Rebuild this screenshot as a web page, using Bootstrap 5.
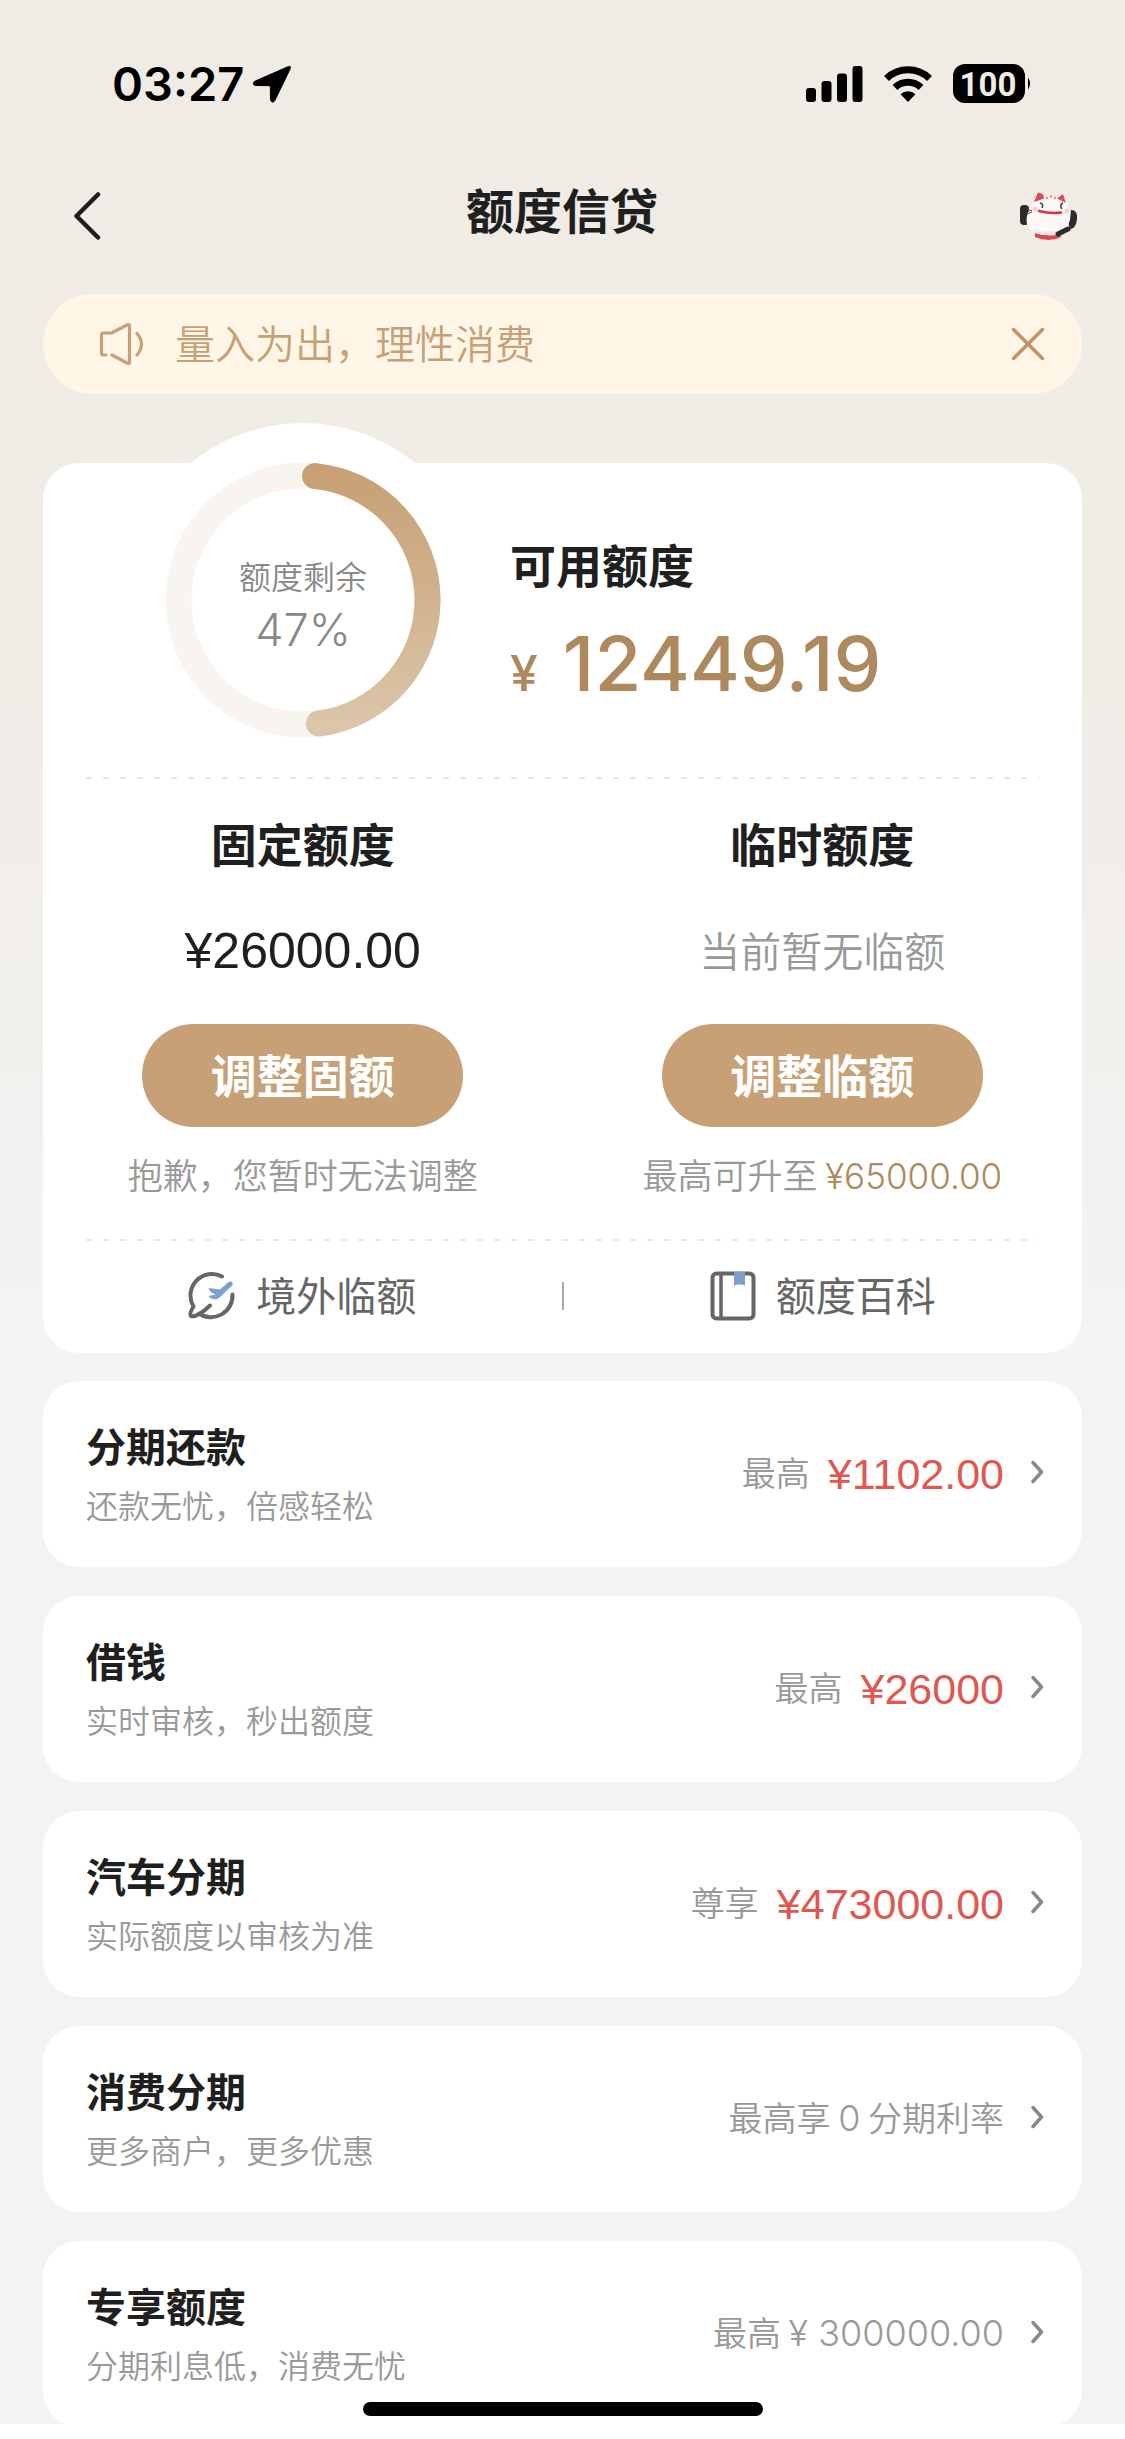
<!DOCTYPE html>
<html lang="zh-CN">
<head>
<meta charset="utf-8">
<meta name="viewport" content="width=device-width, initial-scale=1">
<title>额度信贷</title>
<link href="https://cdn.jsdelivr.net/npm/bootstrap@5.3.0/dist/css/bootstrap.min.css" rel="stylesheet">
<style>
  :root { --gold: #c7a175; --gold-dark: #ad895d; --ink: #1f1f1f; --grey: #999; --side: 43px; }
  body { font-family: "Noto Sans CJK SC", "Liberation Sans", sans-serif; font-weight: 350; color: var(--ink); background: #fff; }
  a { color: inherit; text-decoration: none; }
  svg { display: block; flex: none; }
  .num-soft { font-family: Inter, "Noto Sans CJK SC", sans-serif; font-weight: 300; }
  .num-plain { font-family: "Liberation Sans", "Noto Sans CJK SC", sans-serif; font-weight: 400; }

  .top-zone { background: linear-gradient(#f0ebe5 0%, #f0ece6 48%, #f4f4f4 100%); padding-bottom: 27px; }
  .status-strip { padding: 48px 93px 0 112px; height: 120px; }
  .clock { font: 600 47px/72px Inter, sans-serif; color: #000; }
  .page-head { padding: 18px 46px 0 74px; height: 174px; }
  .page-title { font-size: 48px; line-height: 60px; font-weight: 600; padding-bottom: 16px; }
  .icon-btn { border: 0; background: none; padding: 0; color: inherit; }

  .notice { margin: 0 var(--side); padding: 0 37px 0 56px; height: 100px; background: #fff6e7; color: var(--gold); }
  .notice-text { font-size: 40px; line-height: 60px; margin-left: 28px; padding-bottom: 4px; }

  .panel { background: #fff; border-radius: 36px; margin: 0 var(--side); }
  .limit-panel { margin-top: 69px; }
  .ring { width: 354px; height: 354px; margin: -40px 30px 0 83px; border-radius: 50%; background: #fff; }
  .ring-label { color: #888; padding-top: 12px; gap: 3px; }
  .ring-name { font-size: 32px; line-height: 44px; }
  .ring-value { font-size: 45px; line-height: 60px; }
  .avail { padding-top: 70px; }
  .h-limit { font-size: 46px; line-height: 60px; font-weight: 600; }
  .avail-sum { margin-top: 25px; line-height: 90px; color: var(--gold-dark); font-family: Inter, sans-serif; font-weight: 500; }
  .avail-sum .cur { font-size: 50px; margin-right: 25px; }
  .avail-sum .val { font-size: 76px; }
  .dots { height: 2px; margin: 0 var(--side); background: repeating-linear-gradient(90deg, #e6e6e6 0 6px, transparent 6px 17px); }
  .limit-cols { padding: 33px 0 38px; }
  .limit-value { height: 60px; line-height: 60px; margin: 49px 0 43px; font-size: 50px; }
  .limit-none { font-size: 41px; line-height: 56px; color: var(--grey); }
  .btn-adjust { width: 321px; height: 103px; padding: 0 0 4px; font-size: 46px; font-weight: 600; color: #fff; background: var(--gold); }
  .limit-note { margin-top: 22px; font-size: 35px; line-height: 50px; color: var(--grey); }
  .gold-text { color: var(--gold-dark); }
  .quick { padding: 26px 0 28px; }
  .quick-link { font-size: 40px; line-height: 54px; gap: 20px; color: #666; font-weight: 400; flex: 1; }
  .quick-link span { padding-bottom: 4px; }
  .quick-sep { width: 2px; height: 28px; background: #aaa; }

  .list-zone { background: #f2f3f5; padding-top: 1px; gap: 29px; }
  .offer { padding: 37px 38px 41px 43px; }
  .offer-name { font-size: 40px; line-height: 54px; font-weight: 600; margin-bottom: 10px; }
  .offer-sub { font-size: 32px; line-height: 44px; color: var(--grey); }
  .offer-side { font-size: 34px; line-height: 54px; color: var(--grey); }
  .offer-side .num-soft { font-size: 36px; }
  .offer-side .offer-sum { font-size: 43px; color: #e0574f; margin-left: 18px; padding-top: 4px; }
  .offer-go { margin-left: 27px; }

  .home-bar { pointer-events: none; }
  .home-pill { width: 400px; height: 14px; margin-bottom: 8px; background: #000; }
  .home-edge { height: 15px; background: #fff; }
</style>
</head>
<body>
<svg width="0" height="0" class="position-absolute" aria-hidden="true">
  <symbol id="go" viewBox="0 0 13 24"><path d="M2 2.500 10.500 12 2 21.500" fill="none" stroke="#888" stroke-width="3.400" stroke-linecap="round" stroke-linejoin="round"/></symbol>
</svg>

<div class="top-zone">
  <div class="status-strip d-flex align-items-center justify-content-between">
    <div class="d-flex align-items-center">
      <span class="clock">03:27</span>
      <svg class="ms-2" width="40" height="38" viewBox="0 0 40 38"><path stroke="#000" stroke-width="1" d="M36.500 1.500 2.800 16.200C.6 17.300 1 20.400 3.600 20.500L17.200 20.700Q18.300 20.700 18.300 21.800L18.500 34.600C18.600 37.500 21.800 37.800 22.900 35.400L38.300 3.600C39.100 1.900 38 .9 36.500 1.500Z"/></svg>
    </div>
    <div class="d-flex align-items-center">
      <svg width="57" height="36" viewBox="0 0 57 36"><rect y="22" width="10" height="14" rx="3"/><rect x="15.500" y="15" width="10" height="21" rx="3"/><rect x="31" y="7.500" width="10" height="28.500" rx="3"/><rect x="46.500" width="10" height="36" rx="3"/></svg>
      <svg class="ms-3 me-3" width="58" height="36" viewBox="-1 0 50 36"><g fill="none" stroke="#000" stroke-width="7"><path d="M2.500 12.500A31 31 0 0 1 45.500 12.500"/><path d="M11 21.500A19 19 0 0 1 37 21.500"/></g><path d="M24 36 16.500 28.300A11 11 0 0 1 31.500 28.300Z"/></svg>
      <svg width="79" height="40" viewBox="0 0 79 40"><rect width="72" height="39" rx="12"/><path d="M75 13.500Q79 19.500 75 25.500Z"/><text x="35" y="31.500" text-anchor="middle" font-family="Roboto" font-weight="700" font-size="33" fill="#f0ebe5">100</text></svg>
    </div>
  </div>

  <header class="page-head d-flex align-items-center justify-content-between">
    <button class="icon-btn" type="button" aria-label="返回"><svg width="31" height="48" viewBox="0 0 31 48"><path d="M24 2.500 2.500 24 24 45.500" fill="none" stroke="#1f1f1f" stroke-width="4.500" stroke-linecap="round" stroke-linejoin="round"/></svg></button>
    <h1 class="page-title mb-0">额度信贷</h1>
    <button class="icon-btn" type="button" aria-label="客服">
      <svg width="60" height="50" viewBox="0 0 60 50">
        <rect x="1" y="14" width="9" height="20" rx="4" fill="#2b2b2b"/>
        <path d="M15 12 20 1.500Q25 4 27 7L38 7Q41 3 46 3L48 12Z" fill="#fff"/>
        <path d="M16 46Q30 52 42 46L41 41H16Z" fill="#df4550"/>
        <path d="M14 13C16 4 26 6 32 6 42 6 49 9 49 17 57 30 50 38 46 41 38 46 21 45 14 41 6 36 5 25 14 13Z" fill="#fcf8f6"/>
        <path d="M13 38Q30 44 48 36Q44 44 28 44 17 44 13 38Z" fill="#f1e8e5"/>
        <path d="M15 11 19 1.500Q25 2 25 7.500Z" fill="#e34853"/><path d="M38 7.500 44 3 47 12Z" fill="#e34853"/>
        <circle cx="28" cy="7" r="1.200" fill="#e88a90"/><circle cx="32" cy="5.500" r="1.200" fill="#e88a90"/><circle cx="36" cy="7" r="1.200" fill="#e88a90"/>
        <path d="M21 12Q25 13 23 17M44 12Q40 14 43 18" fill="none" stroke="#444" stroke-width="1.600"/>
        <circle cx="16" cy="18" r="2.500" fill="#f8cdd3"/><circle cx="48" cy="20" r="2.500" fill="#f8cdd3"/>
        <path d="M20 20Q32 23 42 21.500" fill="none" stroke="#d8333f" stroke-width="2.500" stroke-linecap="round"/>
        <path d="M8 18 13 20M8 23 13 21" stroke="#555" stroke-width="1"/>
        <path d="M52 19Q59 19 58 28T52 38Q48 35 51 29Z" fill="#2b2b2b"/>
        <path d="M39 43 49 38" stroke="#2b2b2b" stroke-width="5" stroke-linecap="round"/>
      </svg>
    </button>
  </header>

  <div class="notice rounded-pill d-flex align-items-center">
    <svg width="48" height="44" viewBox="0 0 48 44"><g fill="none" stroke="#c7a175" stroke-width="3.200" stroke-linecap="round" stroke-linejoin="round"><path d="M7 33H4.500Q2.500 33 2.500 31V13Q2.500 11 4.500 11H12.500L29 2.500Q30.500 2 30.500 4V40Q30.500 42 29 41.500L13 33"/><path d="M38 11.500Q47 22 38 33"/></g></svg>
    <span class="notice-text flex-grow-1">量入为出，理性消费</span>
    <button class="icon-btn" type="button" aria-label="关闭"><svg width="34" height="34" viewBox="0 0 34 34"><path d="M2.500 2.500 31.500 31.500M31.500 2.500 2.500 31.500" fill="none" stroke="#be9463" stroke-width="3.500" stroke-linecap="round"/></svg></button>
  </div>

  <main class="panel limit-panel">
    <div class="d-flex align-items-start">
      <div class="ring position-relative flex-shrink-0">
        <svg width="354" height="354" viewBox="0 0 354 354">
          <defs><linearGradient id="arc" x1="0" y1="0" x2="0" y2="1"><stop stop-color="#c7a175"/><stop offset="1" stop-color="#dcc5a9"/></linearGradient></defs>
          <circle cx="177" cy="177" r="124.500" fill="none" stroke="#f8f5f1" stroke-width="26"/>
          <path d="M189 53.100A124.500 124.500 0 0 1 193 300.500" fill="none" stroke="url(#arc)" stroke-width="26" stroke-linecap="round"/>
        </svg>
        <div class="ring-label position-absolute top-0 start-0 w-100 h-100 d-flex flex-column align-items-center justify-content-center">
          <span class="ring-name">额度剩余</span>
          <span class="ring-value num-soft">47%</span>
        </div>
      </div>
      <div class="avail">
        <h2 class="h-limit mb-0">可用额度</h2>
        <div class="avail-sum text-nowrap"><span class="cur">¥</span><span class="val">12449.19</span></div>
      </div>
    </div>

    <div class="dots"></div>

    <div class="limit-cols row g-0 text-center">
      <section class="col-6">
        <h2 class="h-limit mb-0">固定额度</h2>
        <div class="limit-value num-plain">¥26000.00</div>
        <button class="btn btn-adjust d-block mx-auto rounded-pill border-0" type="button">调整固额</button>
        <div class="limit-note">抱歉，您暂时无法调整</div>
      </section>
      <section class="col-6">
        <h2 class="h-limit mb-0">临时额度</h2>
        <div class="limit-value limit-none">当前暂无临额</div>
        <button class="btn btn-adjust d-block mx-auto rounded-pill border-0" type="button">调整临额</button>
        <div class="limit-note">最高可升至 <span class="num-soft gold-text">¥65000.00</span></div>
      </section>
    </div>

    <div class="dots"></div>

    <nav class="quick d-flex align-items-center">
      <a href="#" class="quick-link d-flex align-items-center justify-content-center">
        <svg width="48" height="50" viewBox="0 0 48 50"><g fill="none" stroke="#666" stroke-width="4" stroke-linecap="round" stroke-linejoin="round"><path d="M34 5.500A21.500 21.500 0 0 0 5.500 35.500Q1 43 3 45Q9 47 22 34.500"/><path d="M44.500 23.500A21.500 21.500 0 0 1 11 42.500"/></g><path d="M20.500 17 32 18.500 40 11.500Q43 9.500 44.500 11.500 45.500 13.500 43 15.500L31 27Q29 28.500 25 28 22 27.500 20.500 25L28 23.500Q22 22 20.500 17Z" fill="#7b9fd0"/></svg>
        <span>境外临额</span>
      </a>
      <div class="quick-sep"></div>
      <a href="#" class="quick-link d-flex align-items-center justify-content-center">
        <svg width="46" height="50" viewBox="0 0 46 50"><rect x="2.500" y="2.500" width="41" height="45" rx="4" fill="none" stroke="#666" stroke-width="4"/><path d="M11 3V47" stroke="#666" stroke-width="3.500"/><path d="M24 1H35V15L32.500 13.500H26.500L24 15Z" fill="#7b9fd0"/></svg>
        <span>额度百科</span>
      </a>
    </nav>
  </main>
</div>

<div class="list-zone d-flex flex-column">
  <a href="#" class="panel offer d-flex align-items-center">
    <div class="flex-grow-1"><div class="offer-name">分期还款</div><div class="offer-sub">还款无忧，倍感轻松</div></div>
    <div class="offer-side d-flex align-items-center">最高<span class="offer-sum num-plain">¥1102.00</span></div>
    <svg class="offer-go" width="13" height="24"><use href="#go"/></svg>
  </a>
  <a href="#" class="panel offer d-flex align-items-center">
    <div class="flex-grow-1"><div class="offer-name">借钱</div><div class="offer-sub">实时审核，秒出额度</div></div>
    <div class="offer-side d-flex align-items-center">最高<span class="offer-sum num-plain">¥26000</span></div>
    <svg class="offer-go" width="13" height="24"><use href="#go"/></svg>
  </a>
  <a href="#" class="panel offer d-flex align-items-center">
    <div class="flex-grow-1"><div class="offer-name">汽车分期</div><div class="offer-sub">实际额度以审核为准</div></div>
    <div class="offer-side d-flex align-items-center">尊享<span class="offer-sum num-plain">¥473000.00</span></div>
    <svg class="offer-go" width="13" height="24"><use href="#go"/></svg>
  </a>
  <a href="#" class="panel offer d-flex align-items-center">
    <div class="flex-grow-1"><div class="offer-name">消费分期</div><div class="offer-sub">更多商户，更多优惠</div></div>
    <div class="offer-side">最高享 <span class="num-soft">0</span> 分期利率</div>
    <svg class="offer-go" width="13" height="24"><use href="#go"/></svg>
  </a>
  <a href="#" class="panel offer d-flex align-items-center">
    <div class="flex-grow-1"><div class="offer-name">专享额度</div><div class="offer-sub">分期利息低，消费无忧</div></div>
    <div class="offer-side">最高 <span class="num-soft">¥ 300000.00</span></div>
    <svg class="offer-go" width="13" height="24"><use href="#go"/></svg>
  </a>
</div>

<div class="home-bar fixed-bottom">
  <div class="home-pill rounded-pill mx-auto"></div>
  <div class="home-edge"></div>
</div>
<script src="https://cdn.jsdelivr.net/npm/bootstrap@5.3.0/dist/js/bootstrap.bundle.min.js"></script>
</body>
</html>
